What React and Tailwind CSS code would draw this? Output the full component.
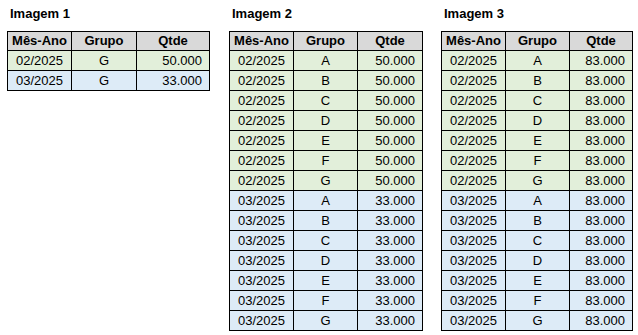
const letters = ["A", "B", "C", "D", "E", "F", "G"];

const tables = [
  {
    title: "Imagem 1",
    left: "ml-[7px]",
    cols: ["w-[64px]", "w-[65px]", "w-[73px]"],
    rows: [
      ["02/2025", "G", "50.000", "green"],
      ["03/2025", "G", "33.000", "blue"],
    ],
  },
  {
    title: "Imagem 2",
    left: "ml-[19px]",
    cols: ["w-[64px]", "w-[64px]", "w-[65px]"],
    rows: [
      ...letters.map((l) => ["02/2025", l, "50.000", "green"]),
      ...letters.map((l) => ["03/2025", l, "33.000", "blue"]),
    ],
  },
  {
    title: "Imagem 3",
    left: "ml-[18px]",
    cols: ["w-[64px]", "w-[64px]", "w-[63px]"],
    rows: [
      ...letters.map((l) => ["02/2025", l, "83.000", "green"]),
      ...letters.map((l) => ["03/2025", l, "83.000", "blue"]),
    ],
  },
];

const Sheet = ({ title, left, cols, rows }) => (
  <div className={`flex flex-col ${left}`}>
    <div className="mt-[6px] h-[15px] pl-[3px] text-[13px] leading-[15px] font-bold text-black">
      {title}
    </div>
    <div className="mt-[10px] border-l border-t border-black">
      <div className="flex bg-[#d9d9d9] font-bold">
        {["Mês-Ano", "Grupo", "Qtde"].map((h, i) => (
          <div
            key={h}
            className={`${cols[i]} h-[19px] border-r border-b border-black flex items-center justify-center leading-[18px]`}
          >
            {h}
          </div>
        ))}
      </div>
      {rows.map(([d, g, q, c], r) => (
        <div
          key={r}
          className={`flex ${c === "green" ? "bg-[#e2efda]" : "bg-[#ddebf7]"}`}
        >
          <div className={`${cols[0]} h-[20px] border-r border-b border-black flex items-center justify-center pt-[1px]`}>
            {d}
          </div>
          <div className={`${cols[1]} h-[20px] border-r border-b border-black flex items-center justify-center pt-[1px]`}>
            {g}
          </div>
          <div className={`${cols[2]} h-[20px] border-r border-b border-black flex items-center justify-end pr-[7px] pt-[1px]`}>
            {q}
          </div>
        </div>
      ))}
    </div>
  </div>
);

export default function App() {
  return (
    <div className="w-[638px] h-[335px] bg-white text-black text-[13px] flex items-start font-['Liberation_Sans',Arial,sans-serif]">
      {tables.map((t) => (
        <Sheet key={t.title} {...t} />
      ))}
    </div>
  );
}
